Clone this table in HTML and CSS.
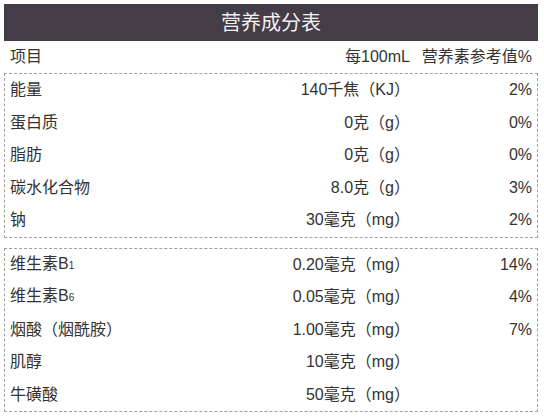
FILE: index.html
```html
<!DOCTYPE html>
<html lang="zh-CN">
<head>
<meta charset="utf-8">
<title>营养成分表</title>
<link rel="stylesheet" href="styles.css">
</head>
<body>
<div class="sheet">
  <div class="title">营养成分表</div>
  <div class="row head">
    <span class="name">项目</span>
    <span class="val">每100mL</span>
    <span class="pct">营养素参考值%</span>
  </div>
  <div class="box">
    <div class="row"><span class="name">能量</span><span class="val">140千焦（KJ）</span><span class="pct">2%</span></div>
    <div class="row"><span class="name">蛋白质</span><span class="val">0克（g）</span><span class="pct">0%</span></div>
    <div class="row"><span class="name">脂肪</span><span class="val">0克（g）</span><span class="pct">0%</span></div>
    <div class="row"><span class="name">碳水化合物</span><span class="val">8.0克（g）</span><span class="pct">3%</span></div>
    <div class="row"><span class="name">钠</span><span class="val">30毫克（mg）</span><span class="pct">2%</span></div>
  </div>
  <div class="box second">
    <div class="row"><span class="name">维生素B<span class="sub">1</span></span><span class="val">0.20毫克（mg）</span><span class="pct">14%</span></div>
    <div class="row"><span class="name">维生素B<span class="sub">6</span></span><span class="val">0.05毫克（mg）</span><span class="pct">4%</span></div>
    <div class="row"><span class="name">烟酸（烟酰胺）</span><span class="val">1.00毫克（mg）</span><span class="pct">7%</span></div>
    <div class="row"><span class="name">肌醇</span><span class="val">10毫克（mg）</span><span class="pct"></span></div>
    <div class="row"><span class="name">牛磺酸</span><span class="val">50毫克（mg）</span><span class="pct"></span></div>
  </div>
</div>
</body>
</html>
```

FILE: styles.css
```css
html, body {
  margin: 0;
  padding: 0;
  background: #ffffff;
}
body {
  font-family: "Liberation Sans", "Noto Sans CJK SC", sans-serif;
  color: #333333;
}
.sheet {
  width: 534px;
  margin: 4px 0 0 4px;
}
.title {
  height: 37px;
  background: #443c46;
  color: #f2f0f2;
  font-size: 20px;
  line-height: 38px;
  text-align: center;
}
.row {
  display: grid;
  grid-template-columns: 1fr 200px 122px;
  align-items: center;
  height: 32.5px;
  padding: 0 5px;
  font-size: 16px;
  line-height: 20px;
  white-space: nowrap;
}
.head {
  height: 32px;
  padding: 0 6px;
}
.val, .pct {
  text-align: right;
}
.box {
  border: 1px dashed #a0a0a0;
}
.second {
  margin-top: 10px;
}
.sub {
  font-size: 10px;
}
```
